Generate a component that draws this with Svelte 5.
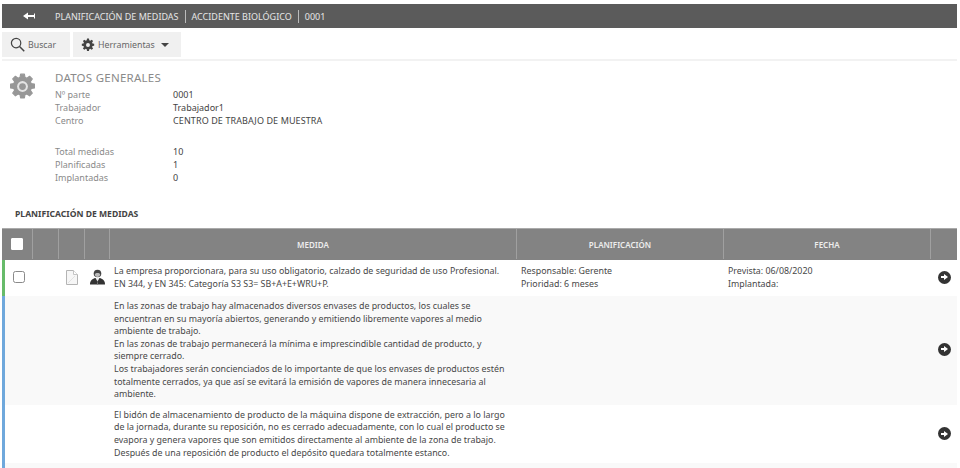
<script>
  const general = [
    { label: 'Nº parte', value: '0001' },
    { label: 'Trabajador', value: 'Trabajador1' },
    { label: 'Centro', value: 'CENTRO DE TRABAJO DE MUESTRA' }
  ];
  const totals = [
    { label: 'Total medidas', value: '10' },
    { label: 'Planificadas', value: '1' },
    { label: 'Implantadas', value: '0' }
  ];
  const gearPath = 'M10.3 1h3.4l.5 2.9 1.7.7 2.4-1.7 2.4 2.4-1.7 2.4.7 1.7 2.9.5v3.4l-2.9.5-.7 1.7 1.7 2.4-2.4 2.4-2.4-1.7-1.7.7-.5 2.9h-3.4l-.5-2.9-1.7-.7-2.4 1.7-2.4-2.4 1.7-2.4-.7-1.7-2.9-.5v-3.4l2.9-.5.7-1.7-1.7-2.4 2.4-2.4 2.4 1.7 1.7-.7z';
</script>

<div class="page">
  <header class="topbar">
    <svg class="back" viewBox="0 0 12 8" width="12" height="8">
      <path d="M0 4l5-3.500v2.500h6v-1.500h1v5h-1v-1.500h-6v2.500z" fill="#fff" />
    </svg>
    <span>PLANIFICACIÓN DE MEDIDAS</span>
    <i></i>
    <span>ACCIDENTE BIOLÓGICO</span>
    <i></i>
    <span>0001</span>
  </header>

  <div class="toolbar">
    <button class="search">
      <svg viewBox="0 0 16 16" width="15" height="15">
        <circle cx="6.500" cy="6.500" r="5" fill="none" stroke="#444" stroke-width="1.300" />
        <path d="M10.200 10.200l5 5" stroke="#444" stroke-width="1.600" />
      </svg>
      Buscar
    </button>
    <button class="tools">
      <svg viewBox="0 0 24 24" width="14" height="14">
        <path d={gearPath} fill="#444" />
        <circle cx="12" cy="12" r="3.400" fill="#f0f0f0" />
      </svg>
      Herramientas
      <b class="caret"></b>
    </button>
  </div>

  <section class="general">
    <svg class="gear" viewBox="0 0 24 24" width="27" height="27">
      <path d={gearPath} fill="#979797" stroke="#979797" stroke-width="1" stroke-linejoin="round" />
      <circle cx="12" cy="12" r="4.800" fill="#e4e4e4" />
      <circle cx="12" cy="12" r="3" fill="#979797" />
    </svg>
    <div>
      <h2>DATOS GENERALES</h2>
      <dl>
        {#each general as row}
          <dt>{row.label}</dt><dd>{row.value}</dd>
        {/each}
      </dl>
      <dl class="totals">
        {#each totals as row}
          <dt>{row.label}</dt><dd>{row.value}</dd>
        {/each}
      </dl>
    </div>
  </section>

  <h3>PLANIFICACIÓN DE MEDIDAS</h3>

  <div class="table">
    <div class="row head">
      <div class="cell"><span class="check white"></span></div>
      <div class="cell"></div>
      <div class="cell"></div>
      <div class="cell"></div>
      <div class="cell">MEDIDA</div>
      <div class="cell">PLANIFICACIÓN</div>
      <div class="cell">FECHA</div>
      <div class="cell"></div>
    </div>

    <div class="row body green">
      <div class="cell mid"><span class="check"></span></div>
      <div class="cell"></div>
      <div class="cell mid">
        <svg viewBox="0 0 12 15" width="12" height="15">
          <path d="M.5.5h7l4 4v10h-11z" fill="#f6f6f6" stroke="#b4b4b4" />
          <path d="M7.500.5v4h4" fill="#fff" stroke="#c4c4c4" />
          <path d="M2 13l7-7" fill="none" stroke="#e2e2e2" />
        </svg>
      </div>
      <div class="cell mid">
        <svg viewBox="0 0 15 16" width="15" height="16">
          <circle cx="7.500" cy="4.500" r="3.800" fill="#444" />
          <path d="M4.800 5c1-1.500 4.400-1.500 5.400 0 0 2-1.200 3-2.700 3s-2.700-1-2.700-3z" fill="#bbb" />
          <path d="M0 15.500c0-4 2-5.500 5-6.500h5c3 1 5 2.500 5 6.500z" fill="#333" />
          <path d="M5.500 9h4l-2 3.500z" fill="#eee" />
          <path d="M7.500 11l-.7 4.500h1.400z" fill="#777" />
        </svg>
      </div>
      <div class="cell text">La empresa proporcionara, para su uso obligatorio, calzado de seguridad de uso Profesional. EN 344, y EN 345: Categoría S3 S3= SB+A+E+WRU+P.</div>
      <div class="cell text">Responsable: Gerente<br />Prioridad: 6 meses</div>
      <div class="cell text">Prevista: 06/08/2020<br />Implantada:</div>
      <div class="cell mid"><span class="go"><b></b></span></div>
    </div>

    <div class="row body blue alt">
      <div></div><div></div><div></div><div></div>
      <div class="cell text">En las zonas de trabajo hay almacenados diversos envases de productos, los cuales se encuentran en su mayoría abiertos, generando y emitiendo libremente vapores al medio ambiente de trabajo.<br />En las zonas de trabajo permanecerá la mínima e imprescindible cantidad de producto, y siempre cerrado.<br />Los trabajadores serán concienciados de lo importante de que los envases de productos estén totalmente cerrados, ya que así se evitará la emisión de vapores de manera innecesaria al ambiente.</div>
      <div></div><div></div>
      <div class="cell mid"><span class="go"><b></b></span></div>
    </div>

    <div class="row body blue">
      <div></div><div></div><div></div><div></div>
      <div class="cell text">El bidón de almacenamiento de producto de la máquina dispone de extracción, pero a lo largo de la jornada, durante su reposición, no es cerrado adecuadamente, con lo cual el producto se evapora y genera vapores que son emitidos directamente al ambiente de la zona de trabajo. Después de una reposición de producto el depósito quedara totalmente estanco.</div>
      <div></div><div></div>
      <div class="cell mid last"><span class="go"><b></b></span></div>
    </div>

    <div class="row body blue alt strip"></div>
  </div>
</div>

<style>
  :global(body) {
    background: #fff;
    overflow: hidden;
  }

  .page {
    font-family: "Noto Sans", sans-serif;
    font-size: 9px;
    color: #333;
    height: 468px;
    padding: 4px 3px 0 2px;
    box-sizing: border-box;
    overflow: hidden;
  }

  .topbar {
    height: 24px;
    background: #5b5b5b;
    color: #e6e6e6;
    display: flex;
    align-items: center;
    gap: 6px;
    padding-left: 21px;
  }

  .topbar .back {
    margin-right: 14px;
  }

  .topbar i {
    width: 1px;
    height: 13px;
    background: #bbb;
  }

  .toolbar {
    display: flex;
    gap: 3px;
    margin-top: 4px;
    padding-bottom: 2px;
    border-bottom: 2px solid #f2f2f2;
  }

  button {
    height: 25px;
    border: 0;
    background: #f0f0f0;
    color: #666;
    font: inherit;
    font-size: 8.800px;
    display: flex;
    align-items: center;
    gap: 3px;
    padding: 0;
  }

  .search {
    width: 68px;
    padding-left: 8px;
  }

  .tools {
    width: 108px;
    padding-left: 8px;
  }

  .caret {
    margin-left: 3px;
    border: 4px solid transparent;
    border-top-color: #444;
    border-bottom: 0;
  }

  .general {
    display: flex;
    gap: 19px;
    padding: 10px 0 0 7px;
  }

  .gear {
    margin-top: 2px;
  }

  h2 {
    margin: 0 0 3px;
    font-size: 11.500px;
    letter-spacing: .25px;
    line-height: 14px;
    font-weight: 400;
    color: #8a8a8a;
  }

  dl {
    display: grid;
    grid-template-columns: 118px auto;
    grid-auto-rows: 13px;
    margin: 0;
    line-height: 13px;
  }

  dt {
    color: #8a8a8a;
  }

  dd {
    margin: 0;
    color: #444;
  }

  dd:last-child {
    letter-spacing: .1px;
  }

  .totals {
    margin-top: 18px;
  }

  h3 {
    margin: 23px 0 0 13px;
    height: 21px;
    font-size: 8.600px;
    line-height: 14px;
    font-weight: 700;
    color: #444;
  }

  .row {
    display: grid;
    grid-template-columns: 31px 26px 26px 25px 407px 207px 207px 26px;
  }

  .head {
    height: 32px;
    background: #838383;
    color: #eee;
    font-size: 8px;
    font-weight: 600;
    border-top: 1px solid #aaa;
    padding-bottom: 1px;
    box-sizing: border-box;
  }

  .head .cell {
    border-right: 1px solid #a0a0a0;
    display: flex;
    align-items: center;
    justify-content: center;
  }

  .head .cell:last-child {
    border-right: 0;
  }

  .body {
    border-left: 3px solid;
    grid-template-columns: 28px 26px 26px 25px 407px 207px 207px 26px;
    font-size: 8.850px;
    line-height: 12.600px;
  }

  .green {
    border-color: #67bb6a;
    height: 36px;
  }

  .blue {
    border-color: #6fa8dc;
  }

  .alt {
    background: #f9f9f9;
  }

  .strip {
    height: 5px;
  }

  .text {
    padding: 5px 8px 5px 4px;
    color: #484848;
  }

  .blue .text {
    padding-top: 4px;
    padding-bottom: 4px;
  }

  .mid {
    display: flex;
    align-items: center;
    justify-content: center;
    padding-bottom: 2px;
  }

  .mid.last {
    padding-bottom: 0;
  }

  .check {
    width: 10px;
    height: 10px;
    border: 1px solid #8a8a8a;
    border-radius: 2.500px;
    background: #fff;
    display: block;
  }

  .check.white {
    border-color: #fff;
    border-radius: 1px;
  }

  .go {
    width: 13px;
    height: 13px;
    border-radius: 50%;
    background: #333;
    position: relative;
    display: block;
  }

  .go b {
    position: absolute;
    left: 3px;
    top: 5.500px;
    width: 4px;
    height: 2px;
    background: #fff;
  }

  .go b::after {
    content: "";
    position: absolute;
    left: 3px;
    top: -2px;
    border: 3px solid transparent;
    border-left: 4px solid #fff;
    border-right: 0;
  }
</style>
